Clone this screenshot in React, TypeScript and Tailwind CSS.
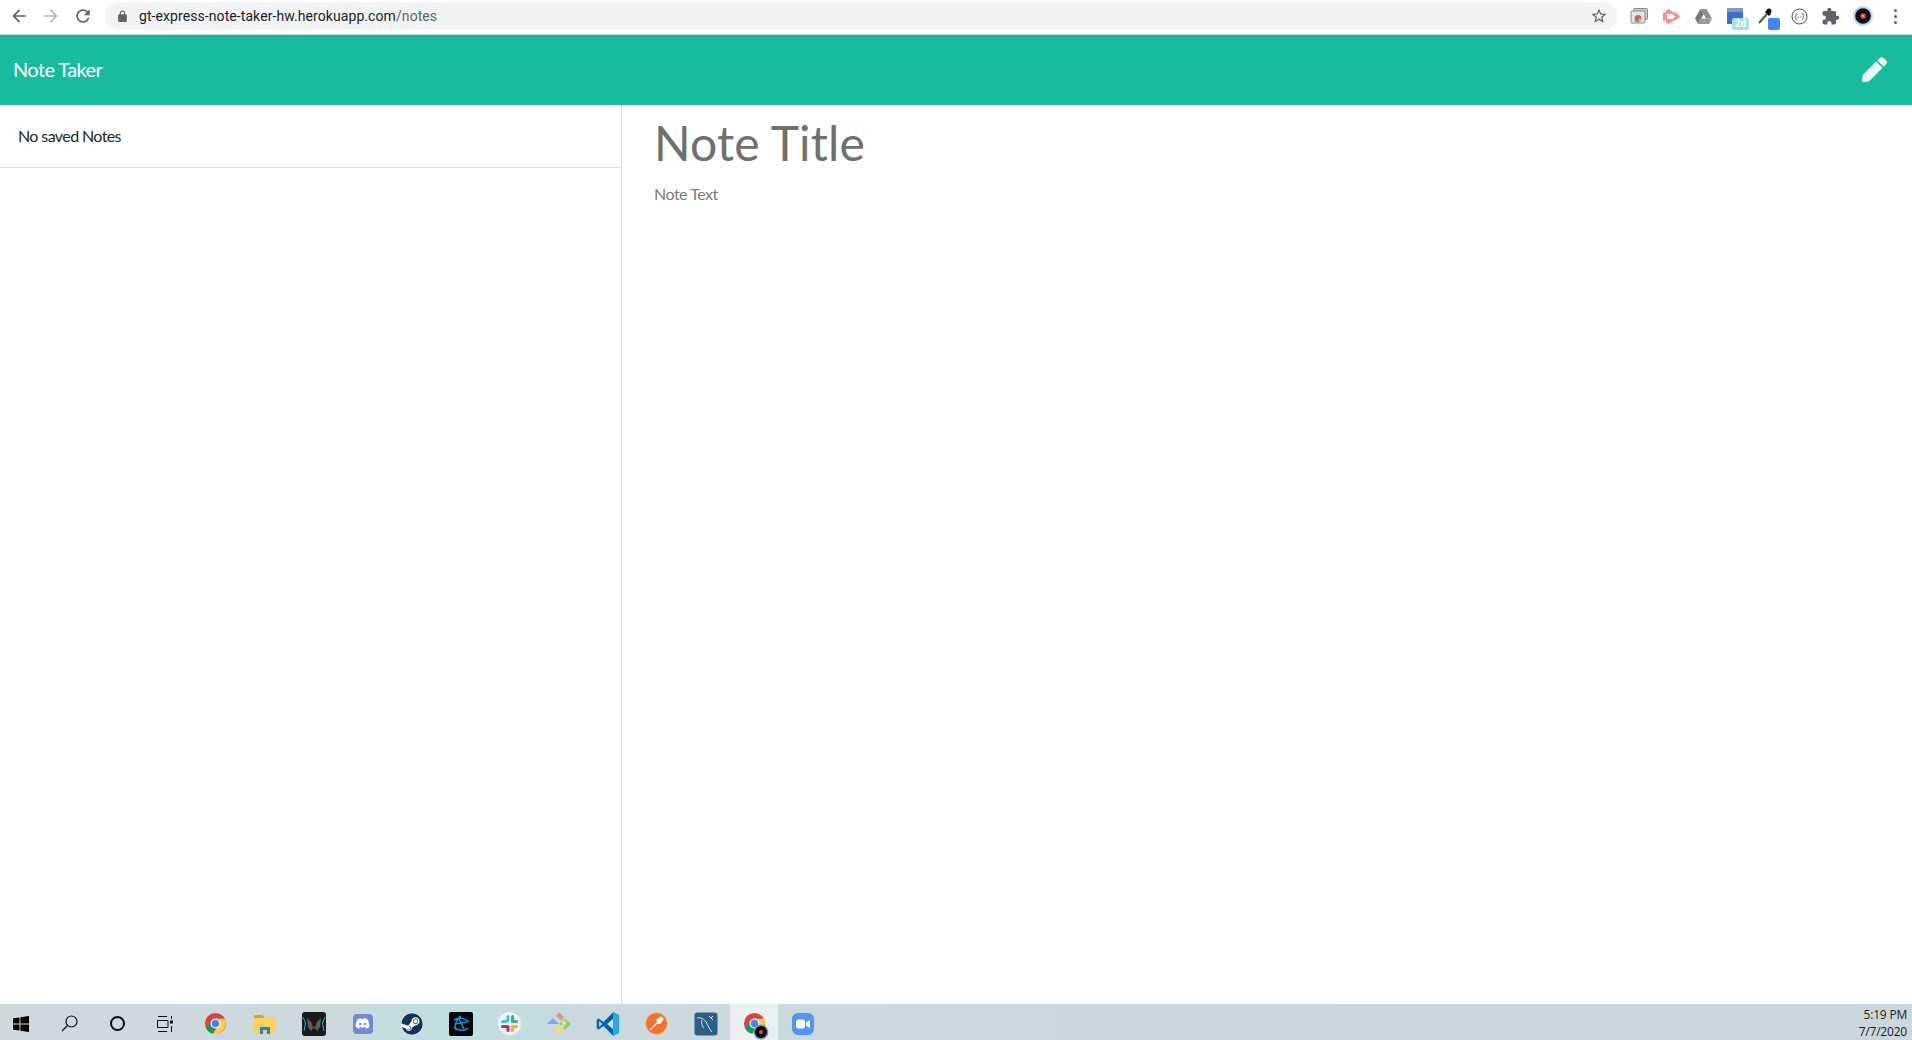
import React from "react";
import { FaDiscord, FaSteam, FaPen } from "react-icons/fa";

const M = ({ d, c, s = 24, cls = "" }: { d: string; c: string; s?: number; cls?: string }) => (
  <svg width={s} height={s} viewBox="0 0 24 24" className={cls}><path d={d} fill={c} /></svg>
);

const Slot = ({ w, children, cls = "" }: { w: string; children: React.ReactNode; cls?: string }) => (
  <div className={`flex h-full shrink-0 items-center justify-center ${w} ${cls}`}>{children}</div>
);

const ChromeIcon = ({ s = 24 }: { s?: number }) => (
  <svg width={s} height={s} viewBox="0 0 48 48">
    <circle cx="24" cy="24" r="22" fill="#db4437" />
    <path d="M5 35 14.500 18 24 24l-5 21.400A22 22 0 0 1 5 35z" fill="#0f9d58" />
    <path d="M24 14h19a22 22 0 0 1-24 31.400L33 24z" fill="#ffcd40" />
    <circle cx="24" cy="24" r="10.500" fill="#fff" />
    <circle cx="24" cy="24" r="8" fill="#4285f4" />
  </svg>
);

const Avatar = ({ s = 20 }: { s?: number }) => (
  <svg width={s} height={s} viewBox="0 0 24 24">
    <circle cx="12" cy="12" r="11" fill="#b8dcf5" />
    <circle cx="12" cy="12" r="8.500" fill="#0b0b1c" />
    <circle cx="12" cy="12" r="3" fill="#e8413c" />
    <circle cx="12" cy="12" r="1.200" fill="#f6c445" />
  </svg>
);

const Toolbar = () => (
  <div className="flex h-[35px] shrink-0 items-center border-b border-[#d4d4d4] bg-white pb-[2px]">
    <Slot w="w-[32px]" cls="ml-[3px]"><M c="#5f6368" s={20} d="M20 11H7.830l5.590-5.590L12 4l-8 8 8 8 1.410-1.410L7.830 13H20v-2z" /></Slot>
    <Slot w="w-[32px]"><M c="#b5b7ba" s={20} d="M12 4l-1.410 1.410L16.170 11H4v2h12.170l-5.580 5.590L12 20l8-8z" /></Slot>
    <Slot w="w-[32px]"><M c="#5f6368" s={20} d="M17.650 6.350C16.200 4.900 14.210 4 12 4c-4.420 0-7.990 3.580-7.990 8s3.570 8 7.990 8c3.730 0 6.840-2.550 7.730-6h-2.080c-.82 2.330-3.040 4-5.650 4-3.310 0-6-2.690-6-6s2.690-6 6-6c1.660 0 3.140.69 4.220 1.780L13 11h7V4l-2.350 2.350z" /></Slot>
    <div className="ml-[6px] flex h-[28px] w-[1512px] shrink-0 items-center rounded-full bg-[#f1f3f4] pl-[11px] pr-[9px]">
      <M c="#5f6368" s={13} d="M18 8h-1V6c0-2.760-2.240-5-5-5S7 3.240 7 6v2H6c-1.100 0-2 .9-2 2v10c0 1.100.9 2 2 2h12c1.100 0 2-.9 2-2V10c0-1.100-.9-2-2-2zM9 6c0-1.660 1.340-3 3-3s3 1.340 3 3v2H9V6z" />
      <span className="ml-[10px] font-['Roboto',sans-serif] text-[14px] tracking-[0.08px] text-[#202124]">gt-express-note-taker-hw.herokuapp.com<span className="text-[#5f6368]">/notes</span></span>
      <M c="#5f6368" s={18} cls="ml-auto" d="M22 9.240l-7.190-.62L12 2 9.190 8.630 2 9.240l5.460 4.730L5.820 21 12 17.270 18.180 21l-1.630-7.030L22 9.240zM12 15.400l-3.760 2.270 1-4.280-3.320-2.880 4.380-.38L12 6.100l1.710 4.040 4.380.38-3.320 2.880 1 4.280L12 15.400z" />
    </div>
    <div className="ml-[6px] flex h-full items-center">
      <Slot w="w-[32px]">
        <svg width="18" height="18" viewBox="0 0 18 18">
          <rect x="3.500" y="1.500" width="14" height="11" rx="1" fill="#c9c9c9" stroke="#8a8a8a" />
          <rect x="1" y="4" width="14" height="12" rx="1" fill="#e6e6e6" stroke="#8a8a8a" />
          <circle cx="8" cy="11.500" r="3.500" fill="#e8574b" />
          <path d="M8 11.500 5 13.300A3.500 3.500 0 0 0 9 14.900z" fill="#4dab5d" />
          <path d="M8 11.500 11.500 11.500A3.500 3.500 0 0 1 9 14.900z" fill="#f5c842" />
          <circle cx="8" cy="11.500" r="1.500" fill="#4285f4" />
        </svg>
      </Slot>
      <Slot w="w-[32px]">
        <svg width="17" height="15" viewBox="0 0 17 15">
          <path d="M0 3.500h3V1.500L6 0l4.500 3.500H13l4 4-4 4h-2.500L6 15l-3-1.500v-2H0z" fill="#ff8d8f" />
          <path d="M4 5h5.500L12 7.500 9.500 10H4z" fill="#fff" />
        </svg>
      </Slot>
      <Slot w="w-[32px]">
        <svg width="17" height="15" viewBox="0 0 17 15">
          <path d="M5.500 0h6L17 9.500h-6z" fill="#8c8c8c" />
          <path d="M5.500 0 0 9.500 3 15l5.500-9.500z" fill="#777" />
          <path d="M3 15h11l3-5.500H6z" fill="#9b9b9b" />
          <path d="M6.800 9.500 8.500 6.600l1.700 2.900z" fill="#fff" />
        </svg>
      </Slot>
      <Slot w="w-[34px]" cls="relative">
        <div className="absolute left-[8px] top-[8px] h-[16px] w-[16px] rounded-[1px] bg-[#3b6fd8]" />
        <div className="absolute left-[8px] top-[8px] h-[4px] w-[16px] bg-[#8b9ab8]" />
        <div className="absolute left-[13px] top-[18px] flex h-[12px] w-[17px] items-center justify-center rounded-[2px] bg-[#a5e0e8] font-['Roboto',sans-serif] text-[10px] font-bold leading-none text-white">2d</div>
      </Slot>
      <Slot w="w-[32px]" cls="relative">
        <svg width="14" height="16" viewBox="0 0 14 16" className="absolute left-[5px] top-[8px]">
          <path d="M1 15 9 6" stroke="#2f6b3c" strokeWidth="2" />
          <path d="M8 3l4 4" stroke="#111" strokeWidth="3" />
          <circle cx="11" cy="3" r="2.500" fill="#111" />
        </svg>
        <div className="absolute left-[15px] top-[18px] h-[12px] w-[12px] rounded-[2px] bg-[#4285f4]" />
      </Slot>
      <Slot w="w-[28px]">
        <svg width="17" height="17" viewBox="0 0 17 17">
          <circle cx="8.500" cy="8.500" r="7.500" fill="#fff" stroke="#444" strokeWidth="1" />
          <path d="M6 5C5 5 5 6 5 7S4 8.500 4 8.500 5 9 5 10s0 2 1 2M11 5c1 0 1 1 1 2s1 1.500 1 1.500-1 .5-1 1.500 0 2-1 2" fill="none" stroke="#444" strokeWidth=".8" />
          <circle cx="7.300" cy="9" r=".6" fill="#444" /><circle cx="9.700" cy="9" r=".6" fill="#444" />
        </svg>
      </Slot>
      <Slot w="w-[32px]" cls="ml-[1px]"><M c="#5f6368" s={19} d="M20.500 11H19V7c0-1.100-.9-2-2-2h-4V3.500C13 2.120 11.880 1 10.500 1S8 2.120 8 3.500V5H4c-1.100 0-1.990.9-1.990 2v3.800H3.500c1.490 0 2.700 1.210 2.700 2.700s-1.210 2.700-2.700 2.700H2V20c0 1.100.9 2 2 2h3.800v-1.500c0-1.490 1.210-2.700 2.700-2.700 1.490 0 2.700 1.210 2.700 2.700V22H17c1.100 0 2-.9 2-2v-4h1.500c1.380 0 2.500-1.120 2.500-2.500S21.880 11 20.500 11z" /></Slot>
      <Slot w="w-[32px]" cls="ml-[1px]"><Avatar s={22} /></Slot>
      <Slot w="w-[32px]">
        <div className="flex flex-col gap-[3px]">
          <div className="h-[3px] w-[3px] rounded-full bg-[#5f6368]" />
          <div className="h-[3px] w-[3px] rounded-full bg-[#5f6368]" />
          <div className="h-[3px] w-[3px] rounded-full bg-[#5f6368]" />
        </div>
      </Slot>
    </div>
  </div>
);

const Taskbar = () => (
  <div className="flex h-[36px] shrink-0 items-center bg-[linear-gradient(90deg,#ced9dc_0%,#ccdadc_18%,#bfe0e0_24%,#ccd9dd_32%,#cad8dd_100%)]">
    <div className="ml-[-3px] flex h-full items-center">
      <Slot w="w-[48px]" cls="pt-[3px]">
        <svg width="16" height="16" viewBox="0 0 16 16"><path d="M0 2.300 6.500 1.400v6.200H0zM7.400 1.300 16 0v7.600H7.400zM0 8.400h6.500v6.200L0 13.700zM7.400 8.400H16V16l-8.600-1.300z" fill="#050505" /></svg>
      </Slot>
      <Slot w="w-[48px]" cls="pt-[3px]">
        <svg width="17" height="17" viewBox="0 0 17 17" fill="none" stroke="#111" strokeWidth="1.200"><circle cx="10.500" cy="6.500" r="5.500" /><path d="M6.500 10.500 1 16" /></svg>
      </Slot>
      <Slot w="w-[48px]" cls="pt-[3px]"><div className="h-[15px] w-[15px] rounded-full border-2 border-[#0c0c0c]" /></Slot>
      <Slot w="w-[48px]" cls="pt-[3px]">
        <svg width="16" height="16" viewBox="0 0 16 16" fill="none" stroke="#111" strokeWidth="1"><path d="M1 .5h9M1 15.500h9M.5 4.500h10.500v7H.5zM14.500 0v3M14.500 10v6" /><rect x="13" y="4.500" width="3" height="3" fill="#111" stroke="none" /></svg>
      </Slot>
    </div>
    <div className="ml-[2px] flex h-full items-center">
      <Slot w="w-[49px]" cls="pt-[3px]"><ChromeIcon s={23} /></Slot>
      <Slot w="w-[49px]" cls="pt-[3px]">
        <svg width="22" height="20" viewBox="0 0 22 20"><path d="M0 2a1 1 0 0 1 1-1h7l2 2v3H0z" fill="#d9a323" /><rect y="4" width="22" height="16" rx="1" fill="#fdd262" /><path d="M6 20v-7h10v7h-3v-4H9v4z" fill="#1e88d8" /></svg>
      </Slot>
      <Slot w="w-[49px]" cls="pt-[3px]">
        <svg width="24" height="24" viewBox="0 0 24 24"><rect width="24" height="24" rx="3" fill="#1a1a1a" /><path d="M1 5l2.500 6-1.500 8" stroke="#22b6d8" strokeWidth="1" fill="none" /><path d="M23 5l-2.500 6 1.500 8" stroke="#22b6d8" strokeWidth="1" fill="none" /><path d="M5 6l4 4 3 8 3-8 4-4-1 9-3 4-3-5-3 5-3-4z" fill="#5e5e5e" /></svg>
      </Slot>
      <Slot w="w-[49px]" cls="pt-[3px]">
        <div className="flex h-[20px] w-[20px] items-center justify-center rounded-[4px] bg-[#7289da]"><FaDiscord color="#fff" size={15} /></div>
      </Slot>
      <Slot w="w-[49px]" cls="pt-[3px]">
        <div className="flex h-[22px] w-[22px] items-center justify-center overflow-hidden rounded-full bg-white"><FaSteam color="#10355c" size={22} /></div>
      </Slot>
      <Slot w="w-[49px]" cls="pt-[3px]">
        <svg width="24" height="24" viewBox="0 0 24 24"><rect width="24" height="24" rx="2" fill="#02060c" /><g fill="none" stroke="#1b8fd8" strokeWidth="1.500"><path d="M5 8c5-3 11-2 15 2M7 18c-2-4 0-11 5-14M19 16c-3 3-9 4-14-1" /><path d="M10 7l5 10M6 12l12-2" /></g></svg>
      </Slot>
      <Slot w="w-[49px]" cls="pt-[3px]">
        <div className="flex h-[23px] w-[23px] items-center justify-center rounded-full bg-[#f3f3f3]">
          <svg width="17" height="17" viewBox="0 0 17 17">
            <rect x="5.500" y="0" width="3" height="7" rx="1.500" fill="#36c5f0" /><rect x="0" y="5" width="7" height="3" rx="1.500" fill="#36c5f0" />
            <rect x="10" y="0" width="3" height="7" rx="1.500" fill="#2eb67d" /><rect x="10" y="5" width="7" height="3" rx="1.500" fill="#2eb67d" />
            <rect x="10" y="10" width="3" height="7" rx="1.500" fill="#ecb22e" /><rect x="10" y="10" width="7" height="3" rx="1.500" fill="#ecb22e" />
            <rect x="5.500" y="10" width="3" height="7" rx="1.500" fill="#e01e5a" /><rect x="0" y="10" width="7" height="3" rx="1.500" fill="#e01e5a" />
          </svg>
        </div>
      </Slot>
      <Slot w="w-[49px]" cls="pt-[3px]">
        <svg width="24" height="24" viewBox="0 0 24 24">
          <path d="M9 4 12 .5l5 4.500-3 3.500z" fill="#f08a8a" />
          <path d="M0 12 6 6l6 6z" fill="#7aa6f5" />
          <path d="M12 12 18 6l6 6-6 6z" fill="#8fd07a" /><circle cx="17" cy="11" r="2" fill="#dfe8c8" />
          <path d="M6 13h12l-6 10z" fill="#f6dd75" />
        </svg>
      </Slot>
      <Slot w="w-[49px]" cls="pt-[3px]">
        <svg width="24" height="24" viewBox="0 0 100 100">
          <path fillRule="evenodd" d="M71 99 96 87V13L71 1 31 42 11 27 3 31v38l8 4 20-15zM71 28 46 50l25 22zM13 37v26l13-13z" fill="#0065a9" />
          <path d="M71 99 96 87V13L71 1z" fill="#2ba6ea" />
        </svg>
      </Slot>
      <Slot w="w-[49px]" cls="pt-[3px]">
        <div className="flex h-[23px] w-[23px] items-center justify-center rounded-full border border-[#f4c4a8] bg-[#f5712f]">
          <svg width="15" height="15" viewBox="0 0 15 15" fill="none" stroke="#fff" strokeWidth="1.300"><path d="M1 14 9 6" /><path d="M8 4l4-3 2 2-3 4-2 0z" fill="#fff" /></svg>
        </div>
      </Slot>
      <Slot w="w-[49px]" cls="pt-[3px]">
        <svg width="24" height="24" viewBox="0 0 24 24"><rect width="23" height="23" rx="3" x=".5" y=".5" fill="#2d5f86" /><path d="M3 6c4-1 7 1 9 4s3 7 6 10M8 8c-1 3 0 6 2 8M15 4l4 4M19 4l-2 2" fill="none" stroke="#d7e3ec" strokeWidth="1" /></svg>
      </Slot>
      <Slot w="w-[48px]" cls="relative bg-[#e9f0f1] pt-[3px]">
        <ChromeIcon s={23} />
        <div className="absolute left-[23px] top-[20px]"><svg width="16" height="16" viewBox="0 0 16 16"><circle cx="8" cy="8" r="7.500" fill="#7c93ad" /><circle cx="8" cy="8" r="6" fill="#0b0b1c" /><circle cx="8" cy="8" r="2" fill="#e8413c" /></svg></div>
      </Slot>
      <Slot w="w-[49px]" cls="pt-[3px] pl-[1px]">
        <div className="flex h-[22px] w-[22px] items-center justify-center rounded-[6px] bg-[#4f96f7]">
          <svg width="14" height="10" viewBox="0 0 14 10"><rect width="9" height="9" y=".5" rx="2" fill="#fff" /><path d="M10 3.500 14 1v8l-4-2.500z" fill="#fff" /></svg>
        </div>
      </Slot>
    </div>
    <div className="ml-auto pr-[5px] pt-[2px] text-right font-['Open_Sans',sans-serif] text-[12px] leading-[17px] tracking-[-0.2px] text-[#1a1a1a]">
      <div>5:19 PM</div>
      <div>7/7/2020</div>
    </div>
  </div>
);

export default function App() {
  return (
    <div className="flex h-[1040px] w-[1912px] flex-col overflow-hidden bg-white font-['Lato',sans-serif]">
      <Toolbar />
      <nav className="flex h-[70px] shrink-0 items-center justify-between bg-[#18bc9c] pb-[2px] pl-[13px] pr-[25px]">
        <span className="text-[20px] tracking-[-0.6px] text-white">Note Taker</span>
        <FaPen color="#f0f6f4" size={25} />
      </nav>
      <main className="flex min-h-0 flex-1">
        <aside className="w-[622px] shrink-0 border-r border-[#dddddd]">
          <div className="flex h-[63px] items-center border-b border-[#dddddd] px-[18px] text-[16px] tracking-[-0.6px] text-[#212529]">No saved Notes</div>
        </aside>
        <section className="flex-1 pl-[32px] pt-[13px]">
          <h1 className="h-[50px] text-[48px] leading-[50px] tracking-[0.15px] text-[#6f6f6f]">Note Title</h1>
          <p className="mt-[14px] text-[16px] leading-[24px] tracking-[-0.5px] text-[#7b7b7b]">Note Text</p>
        </section>
      </main>
      <Taskbar />
    </div>
  );
}
